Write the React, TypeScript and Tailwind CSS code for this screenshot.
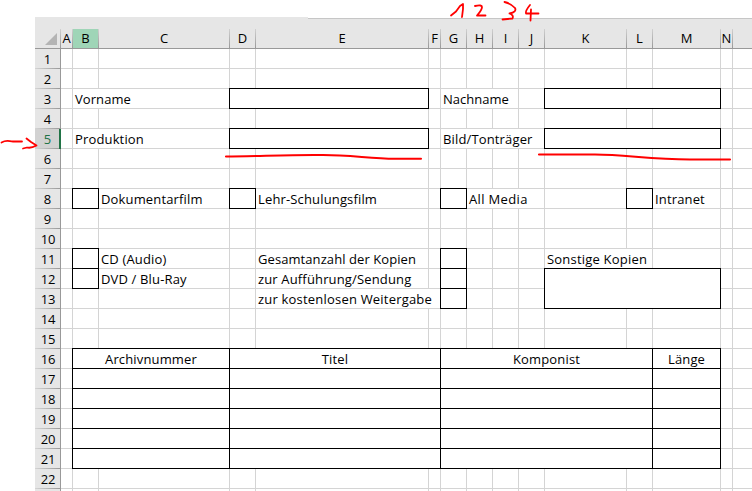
import clsx from "clsx";

type Kind = "plain" | "box";
type Cell = { span?: number; rows?: number; kind?: Kind; text?: string; fit?: string };

const COLUMNS = ["A", "B", "C", "D", "E", "F", "G", "H", "I", "J", "K", "L", "M", "N", ""];
const GRID = "grid shrink-0 grid-cols-[12px_26px_131px_26px_173px_12px_26px_26px_26px_26px_82px_26px_68px_12px_20px]";

const SPANS: Record<number, string> = {
  1: "col-span-1",
  2: "col-span-2",
  3: "col-span-3",
  4: "col-span-4",
  6: "col-span-6",
};

const empty = (count: number): Cell[] => Array.from({ length: count }, () => ({}));
const box = (span = 1, rows = 1, text?: string): Cell => ({ span, rows, kind: "box", text });
const label = (text: string, span = 1, fit = "tracking-[0.15px]"): Cell => ({ span, text, fit });

const tableRow = (titles: string[] = []): Cell[] => [
  {},
  box(2, 1, titles[0]),
  box(3, 1, titles[1]),
  box(6, 1, titles[2]),
  box(1, 1, titles[3]),
  ...empty(2),
];

const ROWS: Cell[][] = [
  empty(15),
  empty(15),
  [{}, label("Vorname", 2, "tracking-[0.08px]"), box(2), {}, label("Nachname", 3, "tracking-normal"), {}, box(3), ...empty(2)],
  empty(15),
  [{}, label("Produktion", 2, "tracking-[0.15px]"), box(2), {}, label("Bild/Tonträger", 4), box(3), ...empty(2)],
  empty(15),
  empty(15),
  [{}, box(), label("Dokumentarfilm"), box(), label("Lehr-Schulungsfilm"), {}, box(), label("All Media", 3, "tracking-[0.35px]"), {}, box(), label("Intranet"), ...empty(2)],
  empty(15),
  empty(15),
  [{}, box(), label("CD (Audio)"), {}, label("Gesamtanzahl der Kopien", 1, "tracking-[0.08px]"), {}, box(), ...empty(3), label("Sonstige Kopien", 2, "tracking-[0.2px]"), ...empty(3)],
  [{}, box(), label("DVD / Blu-Ray"), {}, label("zur Aufführung/Sendung"), {}, box(), ...empty(3), box(3, 2), ...empty(2)],
  [...empty(4), label("zur kostenlosen Weitergabe", 2, "tracking-[0.2px]"), box(), ...empty(3), ...empty(2)],
  empty(15),
  empty(15),
  tableRow(["Archivnummer", "Titel", "Komponist", "Länge"]),
  tableRow(),
  tableRow(),
  tableRow(),
  tableRow(),
  tableRow(),
  empty(15),
];

function SheetCell({ cell }: { cell: Cell }) {
  const boxed = cell.kind === "box";
  return (
    <div
      className={clsx(
        "flex items-start whitespace-nowrap text-[13px] leading-[19px] text-black",
        SPANS[cell.span ?? 1],
        cell.rows === 2 && "row-span-2",
        boxed
          ? "relative z-10 -ml-px -mt-px justify-center border border-black bg-white pt-px tracking-[0.15px]"
          : "border-r border-b border-[#d4d4d4] pt-px pl-[2px]",
      )}
    >
      {cell.text && <span className={cell.fit}>{cell.text}</span>}
    </div>
  );
}

function ColumnHeaders() {
  return (
    <div className="flex h-5 border-b border-[#999999]">
      <div className="flex w-[26px] shrink-0 items-end justify-end bg-[linear-gradient(#d0d0d0,#999999)] pr-px">
        <div className="flex h-full w-full items-end justify-end bg-[#e6e6e6] pr-[3px] pb-[3px]">
          <svg width="12" height="12" viewBox="0 0 12 12">
            <path d="M12 0V12H0Z" fill="#b4b4b4" />
          </svg>
        </div>
      </div>
      <div className={GRID}>
        {COLUMNS.map((name, i) => (
          <div key={i} className="bg-[linear-gradient(#d0d0d0,#999999)] pr-px">
            <div className={clsx("flex h-full items-start justify-center text-[13px] leading-[18px] text-black", name === "B" ? "bg-[#9fd5b7]" : "bg-[#e6e6e6]")}>
              {name}
            </div>
          </div>
        ))}
      </div>
    </div>
  );
}

function RowHeaders() {
  return (
    <div className="w-[26px] shrink-0">
      {ROWS.map((_, i) => (
        <div
          key={i}
          className={clsx(
            "flex h-5",
            i === 4 ? "border-r-2 border-r-[#217346]" : "border-r border-[#999999]",
          )}
        >
          <div className="flex flex-1 bg-[linear-gradient(90deg,#d4d4d4,#999999)] pb-px">
            <div className={clsx("flex flex-1 items-center justify-center text-[13px] leading-5", i === 4 ? "bg-[#d2d2d2] pl-px text-[#217346]" : "bg-[#e6e6e6] text-black", i > 8 && "pl-px tracking-[-0.3px]")}>
              {i + 1}
            </div>
          </div>
        </div>
      ))}
      <div className="h-[3px] border-r border-[#999999] bg-[#e6e6e6]" />
    </div>
  );
}

function Annotations() {
  return (
    <svg className="pointer-events-none absolute inset-0 z-20" width="752" height="491" viewBox="0 0 752 491" fill="none" stroke="#ff0000" strokeWidth="1.8" strokeLinecap="round" strokeLinejoin="round">
      <path d="M451 15.500L456 11.500L460 6L463 4L463 9L462 17" />
      <path d="M475 6Q482 4.500 482 7Q482 10 477 15.500L485.500 15.500" />
      <path d="M504.500 2Q511 3.500 515 8Q517 12 509.500 13.500Q514 15 512.500 18.500L502.500 19.500" />
      <path d="M530 5Q525 11 526 13.500L538.500 13.500M531 9.500L530.500 20.500" />
      <path d="M1.500 142.500C7 139.500 9 141.500 13 141.500H22" />
      <path d="M26.500 138.500L31 142L36.500 145.500Q31 148.500 27 147.500L23 148.500" />
      <g strokeWidth="2.1">
        <path d="M226 156.500C255 156.500 290 154.500 323 155C350 155 370 158.500 395 158.800H421" />
        <path d="M539 154.500H595C625 154.500 650 159.500 690 159.500H730" />
      </g>
    </svg>
  );
}

export default function App() {
  return (
    <main className="relative h-[491px] w-[752px] overflow-hidden bg-white pt-[17px] pl-[35px] font-['Open_Sans',sans-serif]">
      <div className="flex h-3">
        <div className="w-[273px] bg-[#e6e6e6]" />
        <div className="mt-px flex-1 border-t border-[#c6c6c6] bg-[#e6e6e6]" />
      </div>
      <ColumnHeaders />
      <div className="flex">
        <RowHeaders />
        <div className={clsx(GRID, "auto-rows-[20px] content-start")}>
          {ROWS.flat().map((cell, i) => (
            <SheetCell key={i} cell={cell} />
          ))}
          {empty(15).map((_, i) => (
            <div key={`tail-${i}`} className="border-r border-[#d4d4d4]" />
          ))}
        </div>
      </div>
      <Annotations />
    </main>
  );
}
